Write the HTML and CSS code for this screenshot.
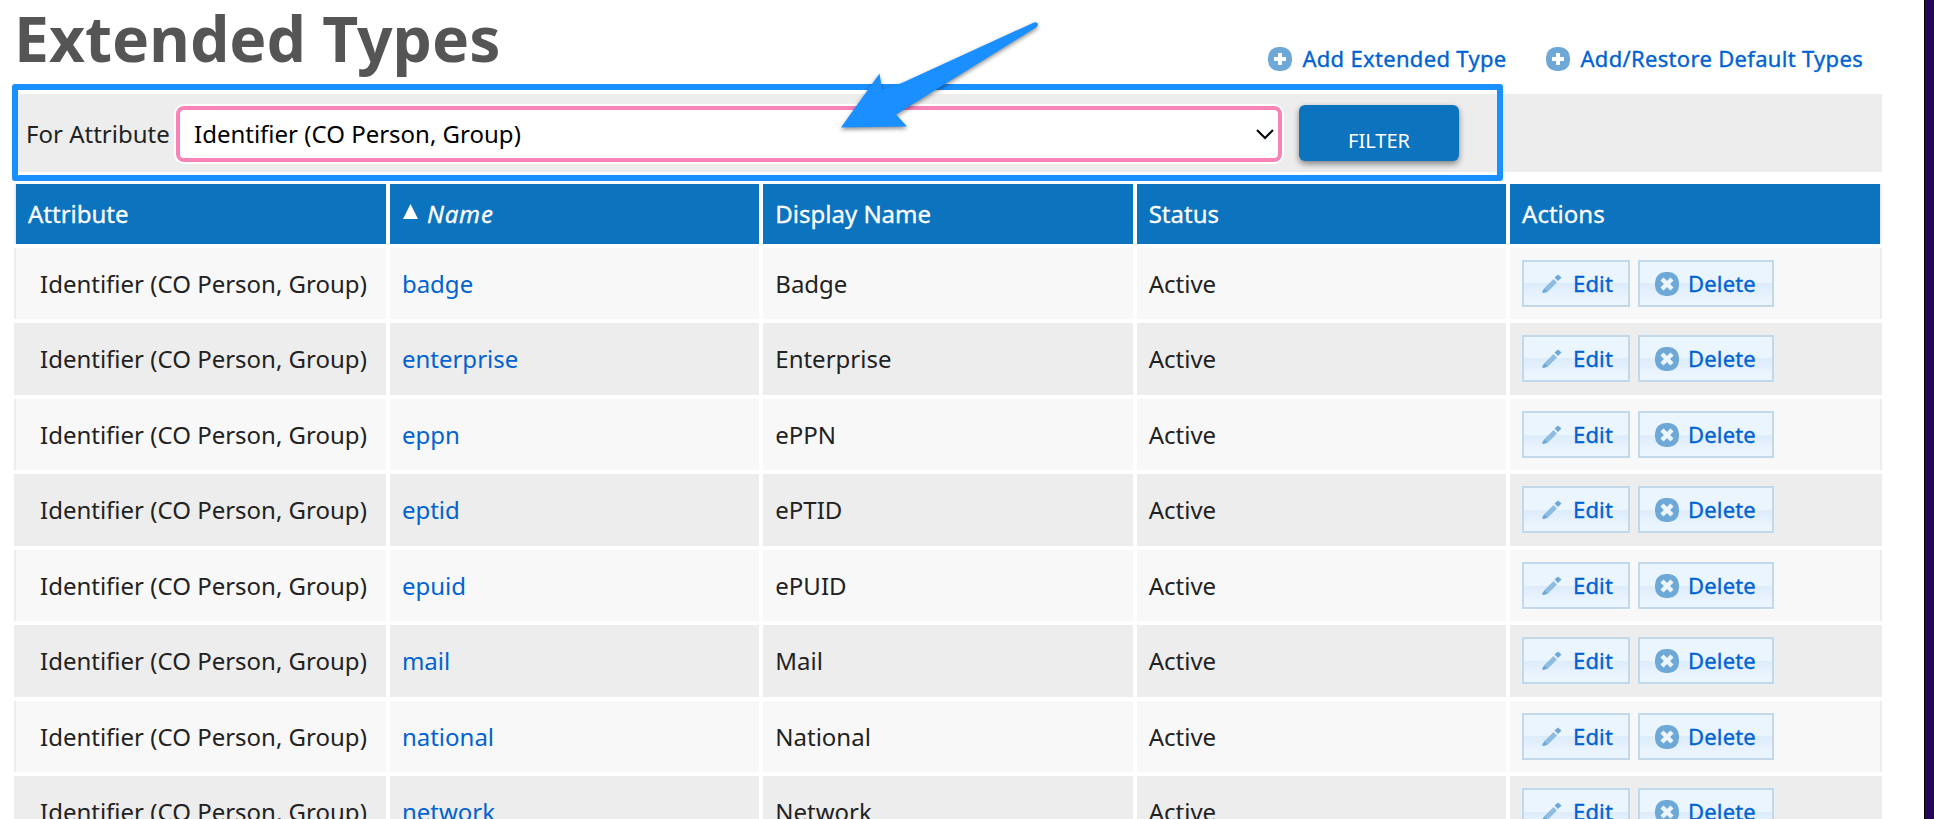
FILE: index.html
```
<!DOCTYPE html>
<html lang="en">
<head>
<meta charset="utf-8">
<title>Extended Types</title>
<link rel="stylesheet" href="styles.css">
</head>
<body>
<svg class="defs" width="0" height="0" aria-hidden="true">
  <symbol id="plus" viewBox="0 0 24 24"><rect width="24" height="24" rx="10.500" fill="#6ea8d7"/><path fill="#fff" d="M10 6h4v4h4v4h-4v4h-4v-4H6v-4h4z"/></symbol>
  <symbol id="cross" viewBox="0 0 24 24"><rect width="24" height="24" rx="10.500" fill="#6ea8d7"/><path fill="none" stroke="#edf6fd" stroke-width="4.400" d="M7 7l10 10M17 7 7 17"/></symbol>
  <symbol id="pencil" viewBox="0 0 20 20"><path fill="#6ea8d7" d="M16 0.500l3.500 3-3.500 3.500-3.500-3.500z"/><path fill="#8fbce1" d="M11.500 5l3.500 3.500-9 9L2.500 14z"/><path fill="#6ea8d7" d="M2.500 14l3.500 3.500-4 1.500H.5V17z"/></symbol>
</svg>
<main class="page">
  <header class="top">
    <h1>Extended Types</h1>
    <nav class="links">
      <a><svg class="icon"><use href="#plus"/></svg><span>Add Extended Type</span></a>
      <a><svg class="icon"><use href="#plus"/></svg><span>Add/Restore Default Types</span></a>
    </nav>
  </header>
  <section class="filter">
    <label>For Attribute</label>
    <div class="select"><span>Identifier (CO Person, Group)</span><svg width="18" height="11" viewBox="0 0 18 11"><path d="M1 1l8 8 8-8" fill="none" stroke="#000" stroke-width="2"/></svg></div>
    <button class="submit">FILTER</button>
    <div class="highlight"></div>
    <svg class="arrow" width="210" height="130" viewBox="830 10 210 130"><path d="M841 127.500L879.500 73.500 882 89.500Q893 87 904 82L1034 22.500Q1037 21.500 1038 24 1038 26 1036 27.500L896 114.500 907 126.500z"/></svg>
  </section>
  <div class="table" id="types">
    <div class="row head"><div>Attribute</div><div><svg class="sort" width="15" height="15" viewBox="0 0 15 15"><path d="M7.500 0L15 15H0z" fill="#fff"/></svg><em>Name</em></div><div>Display Name</div><div>Status</div><div>Actions</div></div>
  </div>
</main>
<aside class="edge"></aside>
<script src="main.js"></script>
</body>
</html>
```
FILE: styles.css
```
* { box-sizing: border-box; }
body { margin: 0; height: 819px; overflow: hidden; display: flex; background: #fff; color: #222; font: 24px "Noto Sans", sans-serif; }
.defs { position: absolute; }
.page { width: 1924px; height: 819px; padding: 0 42px 0 14px; flex: none; }
.edge { width: 10px; height: 819px; background: #220658; border-left: 1px solid #000; flex: none; }
.top { height: 94px; display: flex; justify-content: space-between; }
h1 { margin: 0; height: 76px; font-size: 62.400px; line-height: 76px; color: #555; font-weight: 700; white-space: nowrap; }
.links { display: flex; gap: 40px; padding: 44px 19px 0 0; height: 74px; }
.links a { display: flex; align-items: center; gap: 10px; height: 30px; color: #0163d1; font-size: 22px; letter-spacing: .31px; -webkit-text-stroke: .35px #0163d1; white-space: nowrap; }
.links span { margin-top: -2px; }
.icon { width: 24px; height: 24px; flex: none; }
.filter { position: relative; height: 78px; background: #ededed; display: flex; align-items: flex-start; }
.filter label { width: 162px; padding-left: 12px; line-height: 80px; white-space: nowrap; }
.select { width: 1106px; height: 56px; margin-top: 12px; border: 4px solid #f783b7; border-radius: 8px; box-shadow: 0 0 0 2px #fff; background: #fff; color: #000; display: flex; align-items: center; justify-content: space-between; padding: 0 4px 0 14px; }
.select span { margin-top: -2px; }
.submit { width: 160px; height: 56px; margin: 11px 0 0 17px; padding: 15px 0 0; border: 0; border-radius: 6px; background: #0c73bf; color: #fff; font: 20px "Noto Sans", sans-serif; box-shadow: 0 3px 6px rgba(0,0,0,.45); }
.highlight { position: absolute; left: -2px; top: -10px; width: 1491px; height: 97px; border: 6px solid #1a8fff; border-radius: 3px; }
.arrow { position: absolute; left: 816px; top: -84px; filter: drop-shadow(0 2px 2px rgba(0,0,0,.45)); fill: #1a8fff; }
.table { margin-top: 12px; }
.row { display: grid; grid-template-columns: 372px 369.500px 369.500px 369.500px 372px; column-gap: 3.900px; height: 71px; margin-bottom: 4px; }
.row > div { background: #f8f8f8; display: flex; align-items: center; padding: 0 0 0 12px; white-space: nowrap; }
.row > div:first-child { padding-left: 24px; border-left: 2px solid #ededed; }
.row > div:last-child { border-right: 2px solid #ededed; gap: 8px; }
.row.even { height: 72px; }
.row.even > div { background: #ededed; padding-bottom: 1px; }
.row.head { height: 60px; }
.row.head > div { background: #0c73bf; color: #fff; -webkit-text-stroke: .3px #fff; padding-bottom: 2px; }
.row.head > div:first-child { padding-left: 12px; }
.sort { margin: 0 9px 3px 1px; }
em { letter-spacing: .8px; }
.name { color: #0163d1; }
.btn { height: 47px; border: 2px solid #c2d9ec; display: flex; align-items: center; color: #0163d1; font-size: 22px; letter-spacing: .15px; -webkit-text-stroke: .35px #0163d1; background: linear-gradient(#ebf5fe 0 50%, #ddecfb 50%, #ebf5fe 90%); }
.btn span { margin-top: -2px; }
.edit { width: 108px; padding-left: 18px; gap: 11px; }
.edit svg { width: 20px; height: 20px; }
.delete { width: 136px; padding-left: 15px; gap: 9px; }
```
FILE: main.js
```
const types = [["badge", "Badge"], ["enterprise", "Enterprise"], ["eppn", "ePPN"], ["eptid", "ePTID"], ["epuid", "ePUID"], ["mail", "Mail"], ["national", "National"], ["network", "Network"]];
document.getElementById("types").insertAdjacentHTML("beforeend", types.map(([name, display], i) => `
  <div class="row ${i % 2 ? "even" : ""}">
    <div>Identifier (CO Person, Group)</div>
    <div><a class="name">${name}</a></div>
    <div>${display}</div>
    <div>Active</div>
    <div><a class="btn edit"><svg><use href="#pencil"/></svg><span>Edit</span></a><a class="btn delete"><svg class="icon"><use href="#cross"/></svg><span>Delete</span></a></div>
  </div>`).join(""));
```
